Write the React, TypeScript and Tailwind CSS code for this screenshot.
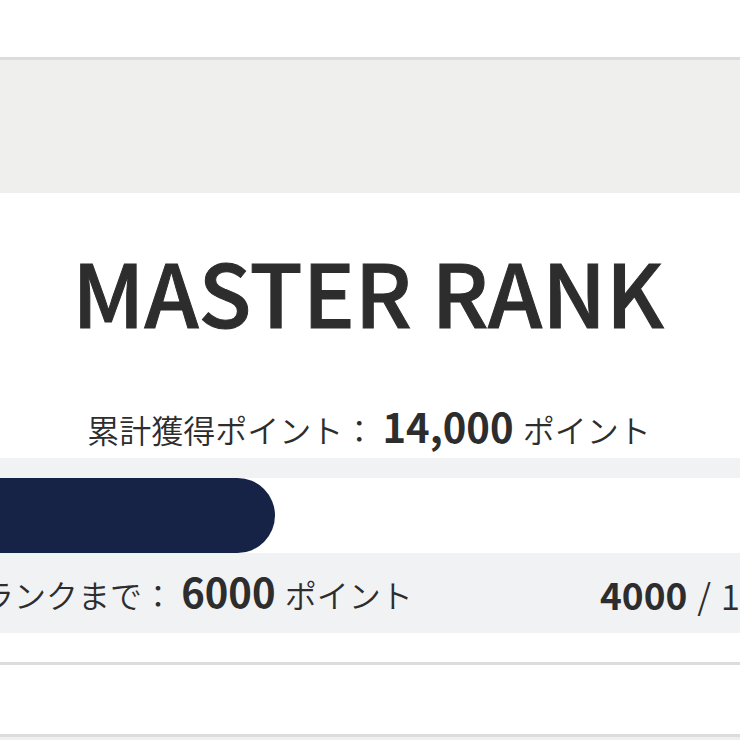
const current = 4000;
const goal = 10000;

export default function App() {
  return (
    <div className="flex min-h-screen flex-col overflow-x-hidden bg-white font-['Noto_Sans_CJK_JP',sans-serif] font-[350] text-[#2d2d2d]">
      <header className="h-[57px]" />
      <div className="h-[136px] border-t-3 border-[#dcdcdc] bg-[#efefee]" />

      <main>
        <h1 className="pt-12 pr-1 text-center text-[87px] leading-[98px] font-medium whitespace-nowrap [-webkit-text-stroke:1px_#2d2d2d]">
          MASTER RANK
        </h1>
        <p className="pt-[66px] pr-0.5 pb-1 text-center text-[32px] leading-[49px] whitespace-nowrap">
          累計獲得ポイント： <strong className="mr-0.5 text-[40px] leading-none font-bold">14,000</strong> ポイント
        </p>

        <section className="overflow-hidden bg-[#f1f2f4] pt-5">
          <div className="h-[75px] bg-white" role="progressbar" aria-valuenow={current} aria-valuemax={goal}>
            <div className="h-full w-[275px] rounded-r-full bg-[#162246]" />
          </div>
          <div className="flex h-20 items-center justify-between whitespace-nowrap">
            <p className="-ml-[18px] pt-0.5 text-[32px] leading-[48px]">
              ランクまで： <strong className="mr-0.5 text-[40px] leading-none font-bold">6000</strong> ポイント
            </p>
            <p className="w-[140px] pt-1 text-[35px] leading-[48px]">
              <strong className="mr-0.5 text-[37px] leading-none font-bold">{current}</strong> <span className="mr-0.5">/</span> {goal}
            </p>
          </div>
        </section>
      </main>

      <div className="mt-[29px] h-[75px] border-y-3 border-[#dcdcdc]" />
      <footer className="flex-1 bg-[#efefee]" />
    </div>
  );
}
